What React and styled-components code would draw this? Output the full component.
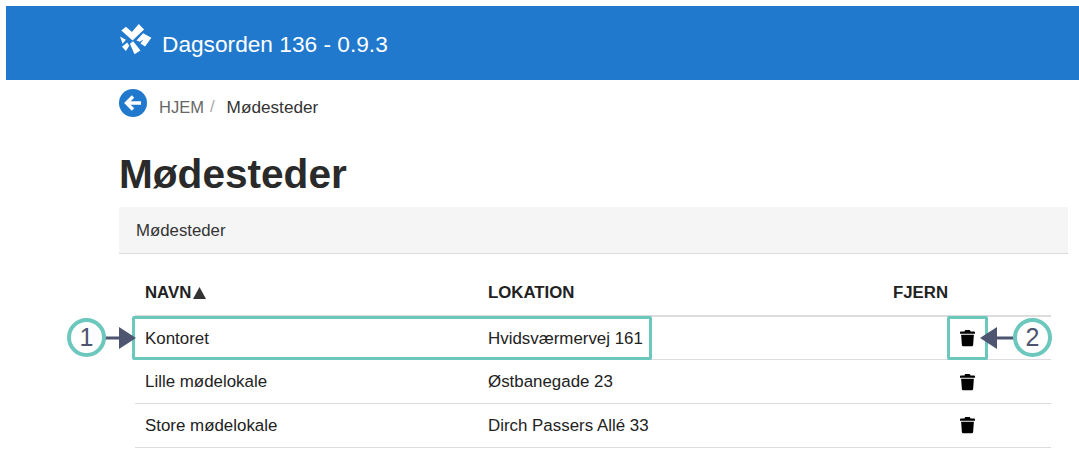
import React from "react";
import styled, { createGlobalStyle } from "styled-components";

const rows = [
  { name: "Kontoret", location: "Hvidsværmervej 161" },
  { name: "Lille mødelokale", location: "Østbanegade 23" },
  { name: "Store mødelokale", location: "Dirch Passers Allé 33" },
];

const GlobalStyle = createGlobalStyle`
  html, body {
    margin: 0;
    background: #fff;
    font-family: "Liberation Sans", Arial, sans-serif;
    color: #222;
  }
`;

const Page = styled.div`
  position: relative;
  width: 1079px;
  height: 462px;
  overflow: hidden;
  padding: 6px 0 0 6px;
  box-sizing: border-box;
`;

const Header = styled.header`
  height: 74px;
  background: #2079cc;
  display: flex;
  align-items: center;
  gap: 10px;
  padding-left: 113px;
  color: #fff;
`;

const Brand = styled.span`
  font-size: 22.7px;
  line-height: 26px;
  margin-top: 2px;
`;

const Content = styled.main`
  padding: 9px 11px 0 113px;
`;

const Breadcrumb = styled.nav`
  display: flex;
  align-items: center;
  height: 28px;
  font-size: 16.8px;
`;

const Home = styled.span`
  color: #666;
  margin-left: 12px;
  margin-top: 8px;
  font-size: 16.5px;
`;

const Slash = styled.span`
  color: #aaa;
  margin: 8px 12px 0 6px;
`;

const Current = styled.span`
  color: #333;
  margin-top: 8px;
  font-size: 17.2px;
`;

const Title = styled.h1`
  margin: 34px 0 0;
  font-size: 40.6px;
  line-height: 46px;
  font-weight: 700;
  color: #2a2a2a;
`;

const PanelHeading = styled.div`
  margin-top: 10px;
  height: 46px;
  background: #f5f5f5;
  border-bottom: 1px solid #ddd;
  padding-left: 17px;
  font-size: 16.8px;
  line-height: 48px;
  color: #333;
`;

const Table = styled.table`
  margin: 17px 0 0 16px;
  width: 916px;
  border-collapse: collapse;
  table-layout: fixed;
  font-size: 16.9px;
`;

const HeadCell = styled.th`
  box-sizing: border-box;
  height: 45px;
  padding: 0 0 0 10px;
  text-align: left;
  font-size: 16.8px;
  font-weight: 700;
  color: #222;
  border-bottom: 2px solid #ddd;
  width: ${(p) => p.$width}px;
`;

const SortMark = styled.svg`
  margin-left: 2px;
  vertical-align: -1px;
`;

const Cell = styled.td`
  box-sizing: border-box;
  height: 43.7px;
  padding: 1px 0 0 10px;
  border-bottom: 1px solid #ddd;
  color: #222;
`;

const IconCell = styled(Cell)`
  padding: 0;
  text-align: center;
  line-height: 0;
`;

const Highlight = styled.div`
  position: absolute;
  box-sizing: border-box;
  top: 316px;
  height: 44px;
  left: ${(p) => p.$left}px;
  width: ${(p) => p.$width}px;
  border: 3px solid #6cc7bd;
  border-radius: 2px;
`;

const Badge = styled.div`
  position: absolute;
  box-sizing: border-box;
  top: 318px;
  left: ${(p) => p.$left}px;
  width: 39px;
  height: 39px;
  border: 4px solid #6cc7bd;
  border-radius: 50%;
  background: #fff;
  color: #4d5570;
  font-size: 25px;
  line-height: 31px;
  text-align: center;
`;

const Pointer = styled.svg`
  position: absolute;
  top: 326px;
  left: ${(p) => p.$left}px;
`;

const Logo = () => (
  <svg width="33" height="33" viewBox="55 65 100 100" fill="#fff" style={{ marginTop: -8 }}>
    <path d="M62 88l14-12 18 16 21-24 16 17-35 33z" />
    <path d="M108 118l20-22 25 14-19 26-14-9 9-12-11 7z" />
    <path d="M88 128l10-8 22 28-18 12z" />
    <path d="M58 106l18 10-10 12z" />
    <path d="M64 137l16-13 6 10-10 16z" />
  </svg>
);

const BackIcon = () => (
  <svg width="28" height="28" viewBox="0 0 28 28">
    <circle cx="14" cy="14" r="14" fill="#2079cc" />
    <path
      d="M22 14H8M14 7.500l-6.500 6.500 6.500 6.500"
      fill="none"
      stroke="#fff"
      strokeWidth="3.4"
    />
  </svg>
);

const TrashIcon = () => (
  <svg width="15" height="18" viewBox="0 0 16 18" fill="#000">
    <path d="M5.500 0.500h5l.8 1.500H15a1 1 0 0 1 1 1V4.500H0V3a1 1 0 0 1 1-1h3.700z" />
    <path d="M1.200 5.500h13.600l-.8 11a1.500 1.500 0 0 1-1.500 1.400H3.500A1.500 1.500 0 0 1 2 16.500z" />
  </svg>
);

const Arrow = ({ left, flip }) => (
  <Pointer $left={left} width="34" height="24" viewBox="0 0 34 24" fill="#4d5570">
    {flip ? (
      <>
        <path d="M0 12L17 1v22z" />
        <rect x="16" y="10.500" width="18" height="3" />
      </>
    ) : (
      <>
        <path d="M34 12L17 1v22z" />
        <rect x="0" y="10.500" width="18" height="3" />
      </>
    )}
  </Pointer>
);

export default function App() {
  return (
    <Page>
      <GlobalStyle />
      <Header>
        <Logo />
        <Brand>Dagsorden 136 - 0.9.3</Brand>
      </Header>
      <Content>
        <Breadcrumb>
          <BackIcon />
          <Home>HJEM</Home>
          <Slash>/</Slash>
          <Current>Mødesteder</Current>
        </Breadcrumb>
        <Title>Mødesteder</Title>
        <PanelHeading>Mødesteder</PanelHeading>
        <Table>
          <thead>
            <tr>
              <HeadCell $width={343}>
                NAVN
                <SortMark width="13" height="12" viewBox="0 0 13 12" fill="#333">
                  <path d="M6.500 0L13 12H0z" />
                </SortMark>
              </HeadCell>
              <HeadCell $width={405}>LOKATION</HeadCell>
              <HeadCell $width={168}>FJERN</HeadCell>
            </tr>
          </thead>
          <tbody>
            {rows.map((row) => (
              <tr key={row.name}>
                <Cell>{row.name}</Cell>
                <Cell>{row.location}</Cell>
                <IconCell>
                  <TrashIcon />
                </IconCell>
              </tr>
            ))}
          </tbody>
        </Table>
      </Content>
      <Highlight $left={132} $width={520} />
      <Highlight $left={947} $width={41} />
      <Arrow left={102} />
      <Arrow left={980} flip />
      <Badge $left={67}>1</Badge>
      <Badge $left={1013}>2</Badge>
    </Page>
  );
}
